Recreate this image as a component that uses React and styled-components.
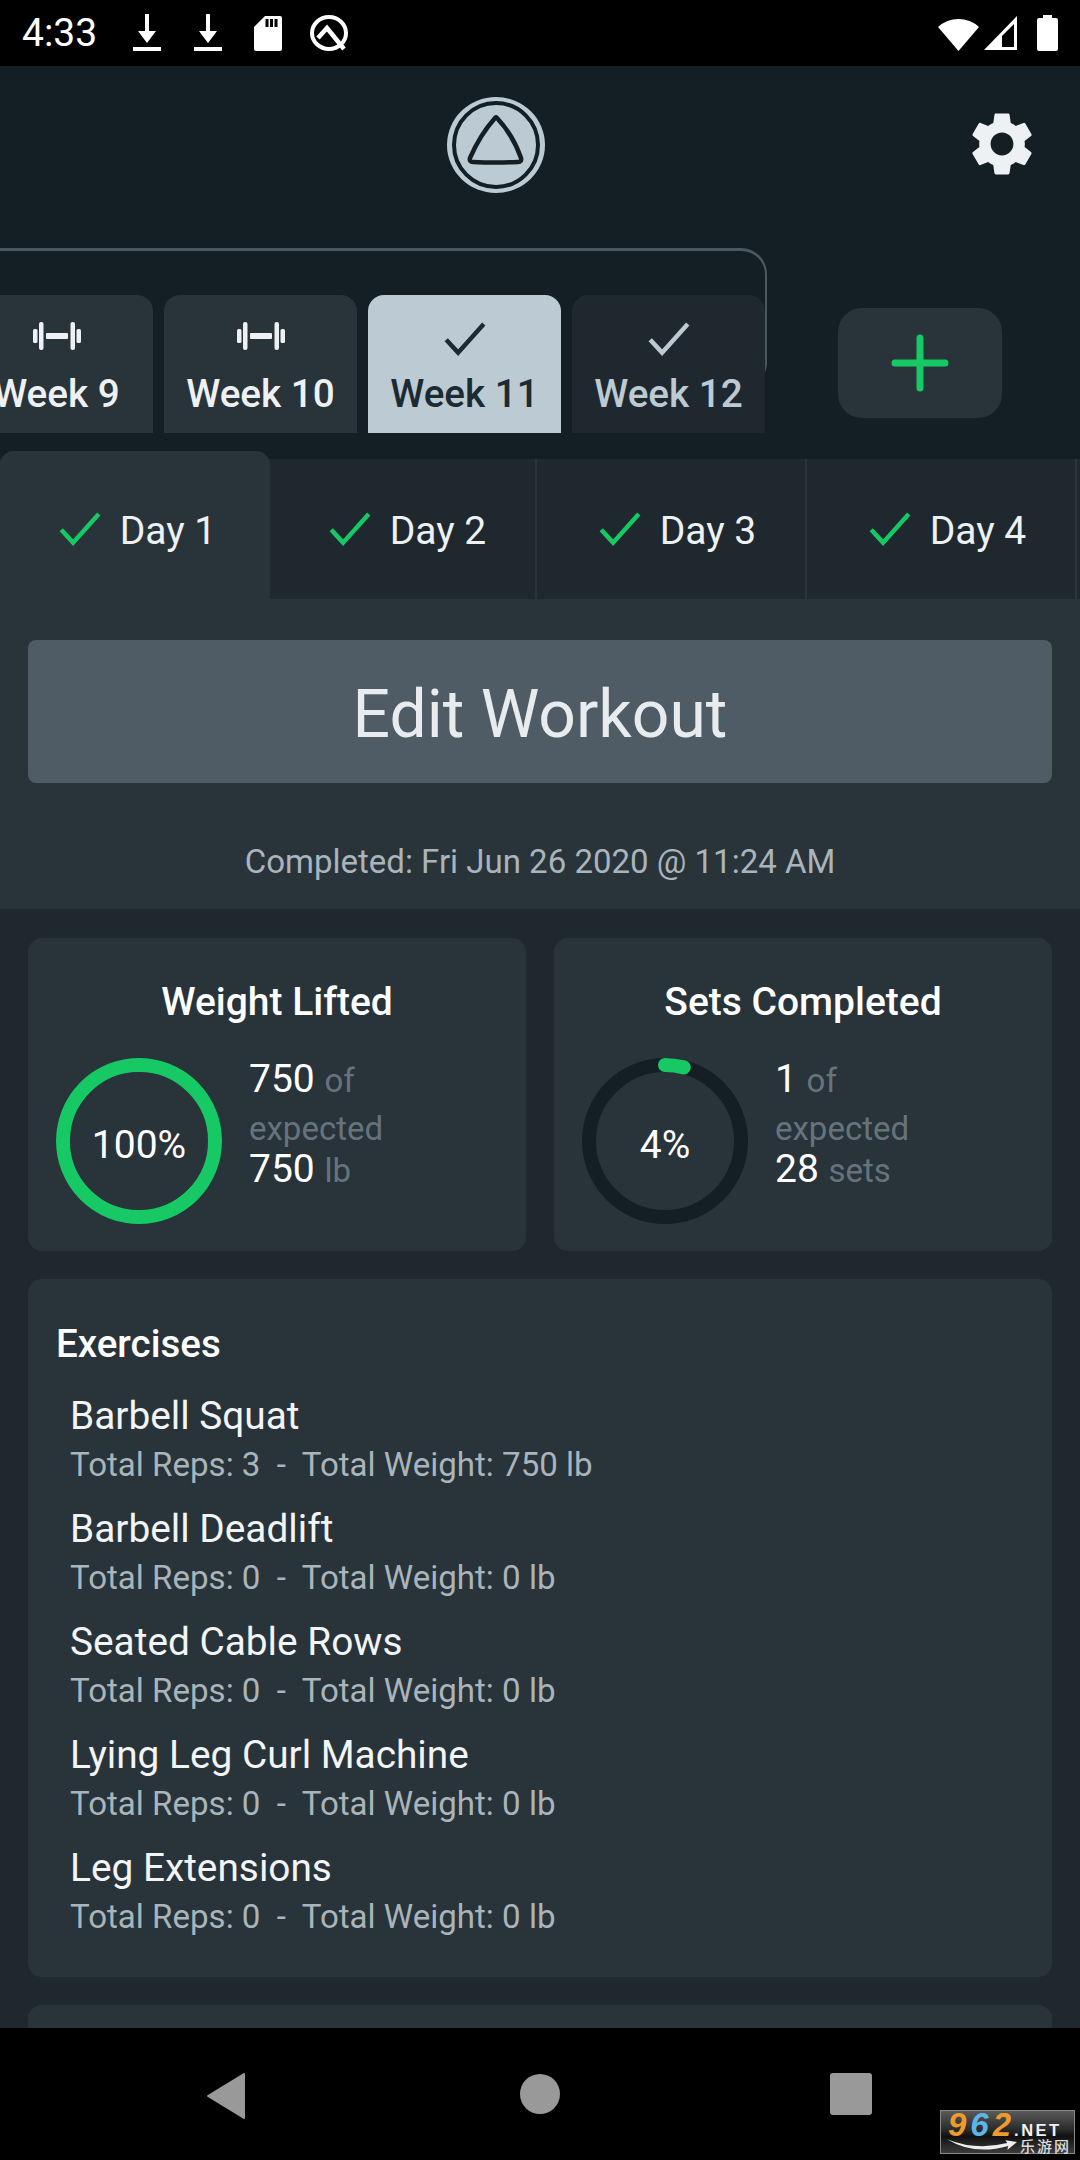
import styled, { createGlobalStyle } from 'styled-components';
import { MdSettings } from 'react-icons/md';

const Global = createGlobalStyle`
	html, body {
		margin: 0;
		padding: 0;
		background: #000;
	}
	* {
		box-sizing: border-box;
	}
`;

const Phone = styled.div`
	width: 1080px;
	height: 2160px;
	display: flex;
	flex-direction: column;
	overflow: hidden;
	position: relative;
	font-family: Roboto, 'Liberation Sans', sans-serif;
	color: #fff;
	background: #1f282e;
`;

const StatusBar = styled.div`
	height: 66px;
	flex: none;
	background: #000;
	display: flex;
	align-items: center;
	padding: 0 22px 0 22px;
	gap: 31px;
`;
const Clock = styled.span`
	font-size: 39px;
	margin-right: 4px;
	line-height: 66px;
`;
const QSlot = styled.span`
	margin-left: -3px;
	line-height: 0;
`;
const StatusRight = styled.div`
	margin-left: auto;
	display: flex;
	align-items: center;
	gap: 4px;
`;

const Header = styled.header`
	flex: none;
	height: 393px;
	background: #141e25;
	display: flex;
	flex-direction: column;
`;
const LogoRow = styled.div`
	height: 182px;
	flex: none;
	display: flex;
	justify-content: center;
	align-items: center;
	position: relative;
	padding: 0 88px 24px 0;
`;
const SettingsButton = styled.div`
	position: absolute;
	right: 40px;
	top: 40px;
	line-height: 0;
	color: #eef1f3;
`;
const WeekRow = styled.div`
	display: flex;
	align-items: flex-start;
	height: 185px;
	padding-top: 47px;
`;
const WeekStrip = styled.div`
	width: 767px;
	height: 138px;
	position: relative;
	display: flex;
	justify-content: flex-end;
	gap: 11px;
	padding-right: 2px;
	flex: none;
	&::before {
		content: '';
		position: absolute;
		left: -20px;
		right: 0;
		top: -47px;
		height: 134px;
		border-top: 3px solid #4a5862;
		border-right: 2px solid #4a5862;
		border-top-right-radius: 26px;
		border-bottom-right-radius: 22px;
	}
`;
const WeekTab = styled.div`
	position: relative;
	flex: none;
	width: 193px;
	height: 138px;
	border-radius: 16px 16px 0 0;
	display: flex;
	flex-direction: column;
	align-items: center;
	padding-top: 27px;
	font-size: 38.7px;
	font-weight: 500;
	background: ${props =>
		props.$state === 'active' ? '#bccbd3' : props.$state === 'done' ? '#1f282e' : '#28333a'};
	color: ${props =>
		props.$state === 'active' ? '#1c2a32' : props.$state === 'done' ? '#bccbd3' : '#eef1f3'};
`;
const WeekIcon = styled.div`
	height: 40px;
	line-height: 0;
	margin-bottom: 9px;
`;
const AddButton = styled.div`
	flex: none;
	margin: 13px 0 0 71px;
	width: 164px;
	height: 110px;
	border-radius: 24px;
	background: #28333a;
	display: flex;
	align-items: center;
	justify-content: center;
	line-height: 0;
`;

const DayRow = styled.div`
	display: flex;
	flex: none;
	height: 140px;
	position: relative;
	align-items: flex-end;
`;
const DayTab = styled.div`
	flex: none;
	position: relative;
	width: 270px;
	height: ${props => (props.$active ? '148px' : '140px')};
	padding: ${props => (props.$active ? '8px' : '0')} 0 0 5px;
	background: ${props => (props.$active ? '#28333a' : '#1f282e')};
	border-radius: ${props => (props.$active ? '14px 14px 0 0' : '0')};
	display: flex;
	align-items: center;
	justify-content: center;
	gap: 19px;
	font-size: 39px;
	color: #eef1f3;
	&::after {
		content: '';
		display: ${props => (props.$active ? 'none' : 'block')};
		position: absolute;
		top: 0;
		bottom: 0;
		right: 3px;
		width: 2px;
		background: #2a353b;
	}
`;
const DayLabel = styled.span`
	padding-top: 4px;
`;

const Main = styled.main`
	flex: 1;
	min-height: 0;
	overflow: hidden;
`;
const EditArea = styled.section`
	height: 310px;
	background: #28333a;
	padding: 41px 28px 0;
	display: flex;
	flex-direction: column;
	align-items: center;
`;
const EditButton = styled.div`
	width: 100%;
	height: 143px;
	border-radius: 8px;
	background: #4f5c65;
	color: #e8ecee;
	font-size: 66px;
	padding-top: 6px;
	display: flex;
	align-items: center;
	justify-content: center;
`;
const Completed = styled.div`
	margin-top: 59px;
	font-size: 33px;
	line-height: 40px;
	color: #a9b4bb;
`;

const Content = styled.section`
	padding: 29px 28px;
	display: flex;
	flex-direction: column;
	gap: 28px;
`;
const StatGrid = styled.div`
	display: grid;
	grid-template-columns: 498px 498px;
	gap: 28px;
`;
const Card = styled.div`
	background: #28333a;
	border-radius: 14px;
`;
const StatCard = styled(Card)`
	height: 313px;
	padding: 0 28px;
`;
const StatTitle = styled.div`
	font-size: 39px;
	font-weight: 500;
	text-align: center;
	line-height: 46px;
	padding-top: 41px;
	white-space: nowrap;
`;
const StatBody = styled.div`
	display: flex;
	gap: 27px;
	margin-top: 33px;
`;
const Ring = styled.div`
	position: relative;
	width: 166px;
	height: 166px;
	flex: none;
	line-height: 0;
`;
const RingLabel = styled.div`
	position: absolute;
	inset: 0;
	display: flex;
	align-items: center;
	justify-content: center;
	font-size: 39px;
	line-height: 1;
	padding-top: 8px;
`;
const StatText = styled.div`
	font-size: 39px;
	margin-top: -4px;
	width: 150px;
`;
const Muted = styled.span`
	color: #66737d;
	font-size: 33px;
`;
const StatLine = styled.div`
	height: ${props => props.$h}px;
	line-height: ${props => props.$h}px;
	white-space: nowrap;
`;

const ExerciseCard = styled(Card)`
	height: 698px;
	padding: 41px 28px 0;
`;
const ExerciseTitle = styled.div`
	font-size: 38.5px;
	font-weight: 500;
	line-height: 48px;
	margin-bottom: 22px;
`;
const Exercise = styled.div`
	padding-left: 14px;
	height: 113px;
`;
const ExerciseName = styled.div`
	font-size: 38.8px;
	line-height: 52px;
	color: #f2f4f5;
`;
const ExerciseMeta = styled.div`
	font-size: 33.1px;
	line-height: 46px;
	color: #a9b4bb;
	white-space: pre;
`;
const NextCard = styled(Card)`
	height: 60px;
	flex: none;
`;

const NavBar = styled.nav`
	height: 132px;
	flex: none;
	background: #000;
	position: relative;
`;
const NavSlot = styled.div`
	position: absolute;
	top: 45px;
	left: ${props => props.$left}px;
	line-height: 0;
`;
const Watermark = styled.div`
	position: absolute;
	right: 5px;
	bottom: 6px;
	width: 135px;
	height: 44px;
	border: 1px solid #888;
	background: linear-gradient(#5a5a5a, #2a2a2a 45%, #111 60%, #3c3c3c);
	font-family: 'Liberation Sans', sans-serif;
	font-weight: 700;
	line-height: 1;
`;
const MarkTop = styled.div`
	display: flex;
	align-items: baseline;
	padding-left: 7px;
	height: 27px;
`;
const MarkDigit = styled.span`
	font-size: 33px;
	font-style: italic;
	letter-spacing: 4px;
	line-height: 28px;
	color: ${props => props.$color};
`;
const MarkNet = styled.span`
	font-size: 16.5px;
	color: #f2f2f2;
	letter-spacing: 2.5px;
	margin-left: -1px;
`;
const MarkBottom = styled.div`
	display: flex;
	align-items: center;
	justify-content: space-between;
	padding: 0 5px 0 6px;
	height: 15px;
`;
const MarkCjk = styled.span`
	font-size: 15px;
	font-family: 'Noto Sans CJK SC', sans-serif;
	font-weight: 500;
	color: #ddd;
	letter-spacing: 2px;
	margin-right: -2px;
	flex: none;
`;

const Download = () => (
	<svg width="30" height="40" viewBox="0 0 30 40">
		<path d="M13 1h4v17h7L15 30 6 18h7z" fill="#fff" />
		<rect x="1" y="34" width="28" height="4" fill="#fff" />
	</svg>
);
const SdCard = () => (
	<svg width="28" height="36" viewBox="0 0 28 36">
		<path d="M11 1h15a2 2 0 0 1 2 2v31a2 2 0 0 1-2 2H2a2 2 0 0 1-2-2V12z" fill="#fff" />
		<path d="M11.500 4h3v8h-3zM16 4h3v8h-3zM20.500 4h3v8h-3z" fill="#000" />
	</svg>
);
const QLogo = () => (
	<svg width="38" height="36" viewBox="0 0 38 36">
		<ellipse cx="19" cy="18" rx="17" ry="16" fill="none" stroke="#fff" strokeWidth="4" />
		<path d="M8 23l9-10 17 21" fill="none" stroke="#fff" strokeWidth="4.500" />
	</svg>
);
const Wifi = () => (
	<svg width="41" height="35" viewBox="0 0 41 35">
		<path d="M0 11A30 30 0 0 1 41 11L20.500 35z" fill="#fff" />
	</svg>
);
// the last 16px keep the gap before the battery
const Signal = () => (
	<svg width="50" height="36" viewBox="0 0 50 36">
		<path d="M34 1v34H1z" fill="#fff" />
		<path d="M31 9v23H19V21z" fill="#000" />
	</svg>
);
const Battery = () => (
	<svg width="21" height="36" viewBox="0 0 21 36">
		<path d="M6 0h9v3h4a2 2 0 0 1 2 2v29a2 2 0 0 1-2 2H2a2 2 0 0 1-2-2V5a2 2 0 0 1 2-2h4z" fill="#fff" />
	</svg>
);

const Logo = () => (
	<svg width="98" height="96" viewBox="0 0 98 96">
		<ellipse cx="49" cy="48" rx="49" ry="48" fill="#bccbd3" />
		<circle cx="49" cy="48" r="42" fill="none" stroke="#141e25" strokeWidth="4" />
		<path
			d="M50 21Q66 38 74 61Q75 65 71 65Q48 66 26 65Q22 65 23 61Q33 38 48 21Q49 20 50 21z"
			fill="none"
			stroke="#141e25"
			strokeWidth="4.500"
			strokeLinejoin="round"
		/>
	</svg>
);

const Dumbbell = () => (
	<svg width="48" height="28" viewBox="0 0 48 28" style={{ display: 'block' }}>
		<g fill="#eef1f3">
			<rect x="0" y="7" width="4.500" height="14" rx="1.500" />
			<rect x="6" y="0" width="4.500" height="28" rx="2" />
			<rect x="13" y="11" width="22" height="6" rx="1" />
			<rect x="37.500" y="0" width="4.500" height="28" rx="2" />
			<rect x="43.500" y="7" width="4.500" height="14" rx="1.500" />
		</g>
	</svg>
);
const Check = ({ color, size = 42, weight = 4.5 }) => (
	<svg width={size} height={size * 0.8} viewBox="0 0 42 34" style={{ display: 'block' }}>
		<path d="M2 18l12 13L40 2" fill="none" stroke={color} strokeWidth={weight} />
	</svg>
);
const Plus = () => (
	<svg width="58" height="58" viewBox="0 0 58 58">
		<path d="M29 4v50M4 29h50" stroke="#17c964" strokeWidth="7" strokeLinecap="round" />
	</svg>
);
const Swoosh = () => (
	<svg width="70" height="13" viewBox="0 0 72 13" style={{ flex: 'none' }}>
		<path d="M0 0Q30 12 62 4L60 1 72 3 62 11 63 7Q28 17 0 0z" fill="#eee" />
	</svg>
);

const weeks = [
	{ label: 'Week 9', state: 'open' },
	{ label: 'Week 10', state: 'open' },
	{ label: 'Week 11', state: 'active' },
	{ label: 'Week 12', state: 'done' },
];
const days = ['Day 1', 'Day 2', 'Day 3', 'Day 4'];
const exercises = [
	{ name: 'Barbell Squat', reps: 3, weight: 750 },
	{ name: 'Barbell Deadlift', reps: 0, weight: 0 },
	{ name: 'Seated Cable Rows', reps: 0, weight: 0 },
	{ name: 'Lying Leg Curl Machine', reps: 0, weight: 0 },
	{ name: 'Leg Extensions', reps: 0, weight: 0 },
];

function ProgressRing({ percent, label }) {
	const r = 76;
	const c = 2 * Math.PI * r;
	return (
		<Ring>
			<svg width="166" height="166" viewBox="0 0 166 166">
				<circle cx="83" cy="83" r={r} fill="none" stroke="#141e25" strokeWidth="14" />
				<circle
					cx="83"
					cy="83"
					r={r}
					fill="none"
					stroke="#17c964"
					strokeWidth="14"
					strokeLinecap="round"
					strokeDasharray={`${(c * percent) / 100} ${c}`}
					transform="rotate(-90 83 83)"
				/>
			</svg>
			<RingLabel>{label}</RingLabel>
		</Ring>
	);
}

function StatPanel({ title, percent, done, total, unit }) {
	return (
		<StatCard>
			<StatTitle>{title}</StatTitle>
			<StatBody>
				<ProgressRing percent={percent} label={`${percent}%`} />
				<StatText>
					<StatLine $h={50}>
						{done} <Muted>of</Muted>
					</StatLine>
					<StatLine $h={46}>
						<Muted>expected</Muted>
					</StatLine>
					<StatLine $h={38}>
						{total} <Muted>{unit}</Muted>
					</StatLine>
				</StatText>
			</StatBody>
		</StatCard>
	);
}

function App() {
	return (
		<Phone>
			<Global />
			<StatusBar>
				<Clock>4:33</Clock>
				<Download />
				<Download />
				<SdCard />
				<QSlot>
					<QLogo />
				</QSlot>
				<StatusRight>
					<Wifi />
					<Signal />
					<Battery />
				</StatusRight>
			</StatusBar>
			<Header>
				<LogoRow>
					<Logo />
					<SettingsButton>
						<MdSettings size={76} />
					</SettingsButton>
				</LogoRow>
				<WeekRow>
					<WeekStrip>
						{weeks.map(week => (
							<WeekTab key={week.label} $state={week.state}>
								<WeekIcon>
									{week.state === 'open' ? (
										<Dumbbell />
									) : (
										<Check
											color={week.state === 'active' ? '#1c2a32' : '#bccbd3'}
										/>
									)}
								</WeekIcon>
								{week.label}
							</WeekTab>
						))}
					</WeekStrip>
					<AddButton>
						<Plus />
					</AddButton>
				</WeekRow>
			</Header>
			<DayRow>
				{days.map((day, i) => (
					<DayTab key={day} $active={i === 0}>
						<Check color="#17c964" />
						<DayLabel>{day}</DayLabel>
					</DayTab>
				))}
			</DayRow>
			<Main>
				<EditArea>
					<EditButton>Edit Workout</EditButton>
					<Completed>Completed: Fri Jun 26 2020 @ 11:24 AM</Completed>
				</EditArea>
				<Content>
					<StatGrid>
						<StatPanel title="Weight Lifted" percent={100} done={750} total={750} unit="lb" />
						<StatPanel title="Sets Completed" percent={4} done={1} total={28} unit="sets" />
					</StatGrid>
					<ExerciseCard>
						<ExerciseTitle>Exercises</ExerciseTitle>
						{exercises.map(item => (
							<Exercise key={item.name}>
								<ExerciseName>{item.name}</ExerciseName>
								<ExerciseMeta>
									{`Total Reps: ${item.reps}  -  Total Weight: ${item.weight} lb`}
								</ExerciseMeta>
							</Exercise>
						))}
					</ExerciseCard>
					<NextCard />
				</Content>
			</Main>
			<NavBar>
				<NavSlot $left={206}>
					<svg width="40" height="46" viewBox="0 0 40 46">
						<path d="M38 1v44L2 23z" fill="#999" stroke="#999" strokeWidth="2" strokeLinejoin="round" />
					</svg>
				</NavSlot>
				<NavSlot $left={520}>
					<svg width="40" height="42" viewBox="0 0 40 42">
						<ellipse cx="20" cy="21" rx="20" ry="20" fill="#999" />
					</svg>
				</NavSlot>
				<NavSlot $left={830}>
					<svg width="42" height="42" viewBox="0 0 42 42">
						<rect width="42" height="42" rx="3" fill="#999" />
					</svg>
				</NavSlot>
				<Watermark>
					<MarkTop>
						<MarkDigit $color="#ef9a2d">9</MarkDigit>
						<MarkDigit $color="#5db4e6">6</MarkDigit>
						<MarkDigit $color="#ef9a2d">2</MarkDigit>
						<MarkNet>.NET</MarkNet>
					</MarkTop>
					<MarkBottom>
						<Swoosh />
						<MarkCjk>乐游网</MarkCjk>
					</MarkBottom>
				</Watermark>
			</NavBar>
		</Phone>
	);
}

export default App;
